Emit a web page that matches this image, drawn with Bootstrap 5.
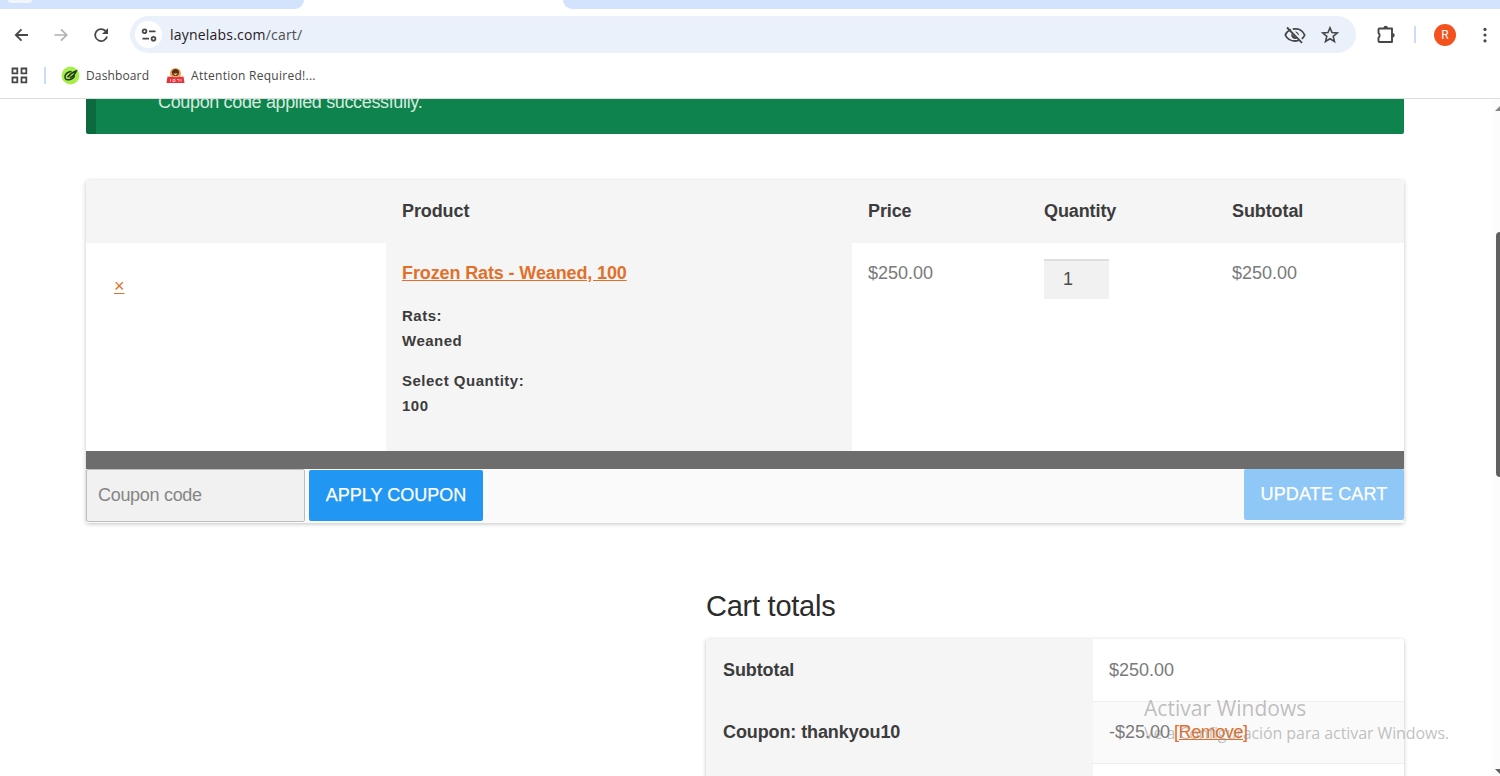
<!DOCTYPE html>
<html lang="en">
<head>
<meta charset="utf-8">
<title>Cart</title>
<link rel="stylesheet" href="https://cdn.jsdelivr.net/npm/bootstrap@5.3.0/dist/css/bootstrap.min.css">
<style>
body{height:776px;overflow:hidden;background:#fff;font-family:"Liberation Sans",Arial,sans-serif;font-size:18px;line-height:27px;color:#7a7a7a}
svg{display:block;flex:none}
.ui-font{font-family:"Open Sans","Noto Sans",sans-serif}
.tabstrip{height:9px;background:#d3e3fd}
.tab-gap{width:304px;background:#d3e3fd;border-bottom-right-radius:9px}
.tab-pill{width:24px;height:3px;margin-left:8px;background:#f1f5fd;border-radius:0 0 10px 10px}
.tab-rest{flex:1;background:#d3e3fd;border-bottom-left-radius:9px}
.toolbar{height:51px;padding:7px 9px 7px 11px}
.addr{height:37px;width:1226px;margin-left:19px;border-radius:19px;background:#ebf1fa;padding:0 17px 0 5px}
.site-info{width:27px;height:27px;border-radius:50%;background:#fff}
.url{font-size:14px;color:#1f2023;margin-left:8px;letter-spacing:.2px}
.url span{color:#4b4e52}
.vline{width:2px;height:17px;background:#c9ddfb}
.avatar{width:22px;height:22px;border-radius:50%;background:#f4511e;color:#fff;font-size:12px;line-height:22px;font-family:Roboto,sans-serif}
.bookmarks{height:39px;padding:0 0 7px 11px;border-bottom:1px solid #dcdee0;font-size:12px;color:#474747}
.view{height:677px;overflow:hidden}
.page-col{width:1318px;margin-left:86px}
.notice{height:35px;background:#0f834d;border-left:10px solid #0b6b3f;border-radius:0 0 2px 2px;color:#d5ebdf;overflow:hidden;padding-left:62px}
.notice span{display:block;margin-top:-10px;letter-spacing:-.35px}
.panel{box-shadow:0 1px 4px rgba(0,0,0,.24);border-radius:3px}
.cart{margin-top:46px;height:343px}
.cart-grid{display:grid;grid-template-columns:300px 466px 176px 188px 188px}
.cart-head{height:63px;background:#f5f5f5;border-radius:3px 3px 0 0}
.cart-head>div{padding:18px 16px;font-weight:700;color:#3c3c3c;letter-spacing:-.1px}
.cart-row{height:208px;background:#fff}
.cart-row>div{padding:17px 16px}
.cart-row .shaded{background:#f5f5f5}
.heavy{font-weight:700;color:#3c3c3c}
a.lk,a.lk:hover{color:#e2702a}
.meta{font-size:15px;line-height:24.5px;letter-spacing:.5px}
.qty{width:65px;height:40px;margin-top:-1px;background:#f1f1f1;border:0;border-top:2px solid #dedede;color:#4a4a4a;padding-left:19px;line-height:37px}
.divider{height:18px;background:#6d6d6d}
.actions{height:54px;background:#fafafa}
.coupon{width:219px;height:53px;border:1px solid #bdbdbd;border-radius:2px;background:#f1f1f1;color:#777;padding:0 11px;font-size:18px;letter-spacing:-.3px}
.coupon::placeholder{color:#858585;opacity:1}
.act{height:51px;border:0;border-radius:2px;background:#2196f3;color:#fff;font-size:18px;padding:0;line-height:49px;-webkit-text-stroke:.25px #fff}
.act.off{background:#8fc7f7;letter-spacing:.15px}
.totals-title{font-size:29px;line-height:36px;font-weight:400;color:#2c2c2c;margin:65px 0 0 620px;letter-spacing:-.25px}
.totals{margin:15px 0 0 620px;width:698px;height:200px;display:grid;grid-template-columns:387px 311px;grid-template-rows:62.500px 62px 62px}
.totals>div{padding:17.5px 16px}
.totals .th{background:#f5f5f5;padding-left:17px;letter-spacing:-.1px}
.line{border-bottom:1px solid #eee}
.scroll-track{right:0;top:99px;width:8px;height:677px;background:#fcfcfc}
.thumb{right:-4px;top:133px;width:8px;height:245px;border-radius:4px;background:#5f6060}
.wmark{left:1144px;top:694px;color:rgba(140,140,140,.55);white-space:nowrap;pointer-events:none}
.w1{font-size:21px;line-height:28px;letter-spacing:.05px}.w2{font-size:16px;line-height:22px;letter-spacing:-.08px}
</style>
</head>
<body class="position-relative">
<header>
  <div class="tabstrip d-flex">
    <div class="bg-white"><div class="tab-gap h-100"><div class="tab-pill"></div></div></div>
    <div class="bg-white" style="width:259px"></div>
    <div class="bg-white flex-grow-1 d-flex"><div class="tab-rest"></div></div>
  </div>
  <div class="toolbar d-flex align-items-center">
    <svg width="22" height="22" viewBox="0 0 22 22" fill="none" stroke="#474747" stroke-width="1.8"><path d="M17 11H5M10.500 5.300L4.800 11l5.700 5.700"/></svg>
    <svg class="ms-3" width="22" height="22" viewBox="0 0 22 22" fill="none" stroke="#b1b1b1" stroke-width="1.700"><path d="M5.500 11H17.500M12 5.300L17.700 11 12 16.700"/></svg>
    <svg style="margin-left:19px;margin-right:-1px" width="22" height="22" viewBox="0 0 22 22"><path d="M17 12.500A6 6 0 1 1 15.500 6.900L17 8.400" fill="none" stroke="#474747" stroke-width="1.800"/><path d="M18 4v6h-6z" fill="#474747"/></svg>
    <div class="addr d-flex align-items-center">
      <div class="site-info d-flex align-items-center justify-content-center"><svg width="16" height="16" viewBox="0 0 16 16" fill="none" stroke="#474747" stroke-width="1.800"><circle cx="3.500" cy="4.300" r="1.900"/><path d="M8 4.300h6.500M1.500 11.700h6.500"/><circle cx="12.500" cy="11.700" r="1.900"/></svg></div>
      <div class="url ui-font">laynelabs.com<span>/cart/</span></div>
      <svg class="ms-auto" width="22" height="20" viewBox="0 0 22 20" fill="none" stroke="#474747" stroke-width="1.800"><path d="M7 4.500C3.800 5.700 2 8 1.300 10c1.700 3.800 5.200 6 9.700 6 1.200 0 2.300-.2 3.300-.5M8.800 4.100C14.500 3.100 19 5.600 20.700 10c-.6 1.500-1.600 2.800-2.900 3.800M3 2.500l15 15.300"/><path d="M7.500 8.500a4 4 0 0 0 5.500 5.100zM11 6.400a4 4 0 0 1 4 4.300z" fill="#474747" stroke="none"/></svg>
      <svg style="margin-left:15px" width="18" height="18" viewBox="0 0 18 18" fill="none" stroke="#474747" stroke-width="1.600"><path d="M9 1.800l2 4.800 5.200.4-4 3.400 1.300 5.100L9 12.800l-4.500 2.700 1.300-5.100-4-3.400L7 6.600z"/></svg>
    </div>
    <svg style="margin-left:20px" width="20" height="20" viewBox="0 0 20 20"><path d="M3.500 3.500H16V17H3.500a1 1 0 0 1-1-1v-3.200a3 3 0 0 0 0-4.700V4.500a1 1 0 0 1 1-1z" fill="none" stroke="#474747" stroke-width="1.900" stroke-linejoin="round"/><path d="M7.500 3a2.200 2.200 0 0 1 4.400 0zM16.500 8a2.200 2.200 0 0 1 0 4.400z" fill="#474747"/></svg>
    <div class="vline" style="margin-left:18px"></div>
    <div class="avatar text-center" style="margin-left:18px">R</div>
    <svg style="margin-left:23px" width="12" height="18" viewBox="0 0 12 18" fill="#474747"><circle cx="6" cy="3.400" r="1.600"/><circle cx="6" cy="9" r="1.600"/><circle cx="6" cy="14.800" r="1.600"/></svg>
  </div>
  <div class="bookmarks ui-font d-flex align-items-center">
    <svg width="17" height="17" viewBox="0 0 17 17" fill="none" stroke="#474747" stroke-width="1.800"><path d="M1.500 1.500h4.800v4.800H1.500zM10.500 1.500h4.800v4.800h-4.800zM1.500 10.500h4.800v4.800H1.500zM10.500 10.500h4.800v4.800h-4.800z"/></svg>
    <div class="vline" style="margin-left:16px"></div>
    <svg style="margin-left:15px" width="19" height="19" viewBox="0 0 19 19"><circle cx="9.500" cy="9.500" r="9" fill="#a6ee4b"/><path d="M10.500 5.500C6.500 5.500 3.500 8.500 4 11.500c.4 2.800 4.500 3 7.200 1.200 1.800-1.200 2.500-2.600 1.800-4.200M6.500 11.200c2-2.500 5-5 8.800-6.200-1 2.500-3.500 5.500-6.500 6.800" fill="none" stroke="#263819" stroke-width="1.500"/></svg>
    <span style="margin-left:6px;letter-spacing:.13px">Dashboard</span>
    <svg style="margin-left:17px" width="20" height="18" viewBox="0 0 20 18"><circle cx="9.500" cy="6.500" r="5.600" fill="#efa65b"/><circle cx="9.500" cy="5.500" r="3.600" fill="#5a301b"/><path d="M7 6.500h5l-2.500 2z" fill="#efc181"/><path d="M1.500 9.500q8 1.500 16 0l1 6.500H.5z" fill="#e8313b"/><path d="M4.500 12v2.500M7 12.500h2v2H7zM11 12.500h2v2M15 12v2.500" fill="none" stroke="#ffd5d5" stroke-width=".8"/></svg>
    <span style="margin-left:5px;letter-spacing:.27px">Attention Required!...</span>
  </div>
</header>

<main class="view">
  <div class="page-col">
    <div class="notice"><span>Coupon code applied successfully.</span></div>

    <section class="panel cart">
      <div class="cart-grid cart-head"><div></div><div>Product</div><div>Price</div><div>Quantity</div><div>Subtotal</div></div>
      <div class="cart-grid cart-row">
        <div><a href="#" class="lk d-inline-block" style="margin:13px 0 0 12px">×</a></div>
        <div class="shaded">
          <a href="#" class="lk fw-bold" style="letter-spacing:-.12px">Frozen Rats - Weaned, 100</a>
          <div class="meta heavy" style="margin-top:17px">Rats:<br>Weaned</div>
          <div class="meta heavy" style="margin-top:16px">Select Quantity:<br>100</div>
        </div>
        <div>$250.00</div>
        <div><div class="qty">1</div></div>
        <div>$250.00</div>
      </div>
      <div class="divider"></div>
      <div class="actions d-flex">
        <input class="coupon" placeholder="Coupon code" aria-label="Coupon code">
        <button class="act" style="width:174px;margin:1px 0 0 4px">APPLY COUPON</button>
        <button class="act off ms-auto" style="width:160px">UPDATE CART</button>
      </div>
    </section>

    <h2 class="totals-title">Cart totals</h2>
    <section class="panel totals">
      <div class="th heavy">Subtotal</div><div class="line">$250.00</div>
      <div class="th heavy">Coupon: thankyou10</div><div class="line" style="background:#fafafa">-$25.00 <a href="#" class="lk" style="letter-spacing:-.45px;margin-left:-1px">[Remove]</a></div>
      <div class="th"></div><div></div>
    </section>
  </div>
</main>

<div class="scroll-track position-absolute overflow-hidden">
  <svg class="position-absolute" style="top:7px;left:3px" width="10" height="6"><path d="M0 5L5 0 10 5z" fill="#858585"/></svg>
  <div class="thumb position-absolute"></div>
  <svg class="position-absolute" style="bottom:1px;left:3px" width="10" height="6"><path d="M0 0H10L5 5z" fill="#606060"/></svg>
</div>
<div class="wmark ui-font position-absolute"><div class="w1">Activar Windows</div><div class="w2">Ve a Configuración para activar Windows.</div></div>
<script src="https://cdn.jsdelivr.net/npm/bootstrap@5.3.0/dist/js/bootstrap.bundle.min.js"></script>
</body>
</html>
